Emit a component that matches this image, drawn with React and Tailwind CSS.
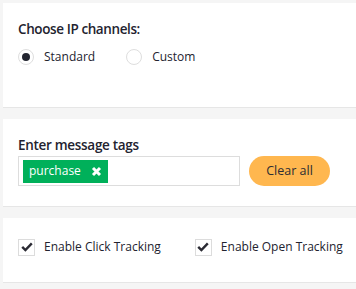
import React from 'react';

const Radio = ({ checked, label }) => (
    <label className="flex items-center gap-[10px]">
        <span className="w-[16px] h-[16px] rounded-full border border-[#dedede] bg-white flex items-center justify-center">
            {checked && <span className="w-[8px] h-[8px] rounded-full bg-[#222530]" />}
        </span>
        <span>{label}</span>
    </label>
);

const Checkbox = ({ label }) => (
    <label className="flex items-center gap-[9px]">
        <span className="w-[17px] h-[17px] border border-[#dcdcdc] bg-white flex items-center justify-center">
            <svg width="12" height="10" viewBox="0 0 12 10">
                <path d="M1.2 4.8 L4.4 8 L10.8 1.4" fill="none" stroke="#2a2a33" strokeWidth="2.4" />
            </svg>
        </span>
        <span>{label}</span>
    </label>
);

const App = () => {
    return (
        <div className="min-h-[289px] bg-[#f5f5f5] pt-[3px] pl-[3px] text-[#23232f] text-[12px] font-['Open_Sans',sans-serif] flex flex-col gap-[11px]">
            <div className="bg-white h-[105px] border-b border-[#e6e6e6] pl-[15px] pt-[16px]">
                <h3 className="font-semibold text-[13.5px] tracking-[-0.4px] mb-[9px]">Choose IP channels:</h3>
                <div className="flex items-center gap-[31px]">
                    <Radio checked label="Standard" />
                    <Radio label="Custom" />
                </div>
            </div>

            <div className="bg-white h-[88px] border-b border-[#e6e6e6] pl-[15px] pt-[16px]">
                <h3 className="font-semibold text-[13.5px] tracking-[-0.3px] mb-[1px]">Enter message tags</h3>
                <div className="flex items-center gap-[9px]">
                    <div className="w-[222px] h-[30px] border border-[#dddddd] flex items-center px-[4px]">
                        <span className="bg-[#00b05a] text-white h-[23px] flex items-center pl-[6px] pr-[6px] gap-[10px] text-[12px]">
                            purchase
                            <svg width="11" height="11" viewBox="0 0 11 11">
                                <path d="M2 2 L9 9 M9 2 L2 9" stroke="white" strokeWidth="3" />
                            </svg>
                        </span>
                    </div>
                    <button className="w-[81px] h-[30px] rounded-full bg-[#ffb74f] text-[#2d2d33] text-[12.5px]">Clear all</button>
                </div>
            </div>

            <div className="bg-white h-[65px] border-b border-[#e6e6e6] pl-[15px] pt-[20px]">
                <div className="flex items-center gap-[34px]">
                    <Checkbox label="Enable Click Tracking" />
                    <Checkbox label="Enable Open Tracking" />
                </div>
            </div>
        </div>
    );
};

export default App;
